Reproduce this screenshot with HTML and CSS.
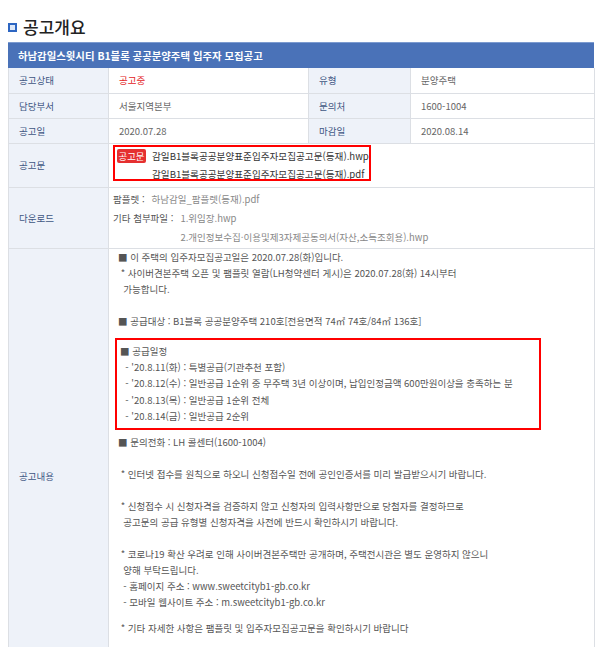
FILE: index.html
```html
<!DOCTYPE html>
<html lang="ko">
<head>
<meta charset="UTF-8" />
<title>공고개요</title>
<meta name="viewport" content="width=device-width, initial-scale=1" />
<link rel="stylesheet" href="styles.css">
</head>
<body>
  <div class="page">
    <!-- TITLE -->
    <h2 class="sec-title"><span class="sq"></span>공고개요</h2>
    <div class="notice-head">하남감일스윗시티 B1블록 공공분양주택 입주자 모집공고</div>

    <!-- SUMMARY TABLE -->
    <table class="info">
      <colgroup>
        <col class="c-lab" /><col class="c-val" /><col class="c-lab2" /><col class="c-val2" />
      </colgroup>
      <tr class="r-short">
        <th>공고상태</th><td class="state">공고중</td>
        <th>유형</th><td>분양주택</td>
      </tr>
      <tr class="r-short">
        <th>담당부서</th><td>서울지역본부</td>
        <th>문의처</th><td>1600-1004</td>
      </tr>
      <tr class="r-short">
        <th>공고일</th><td>2020.07.28</td>
        <th>마감일</th><td>2020.08.14</td>
      </tr>
      <tr class="r-doc">
        <th>공고문</th>
        <td colspan="3">
          <div class="doc-box">
            <div class="doc-line"><span class="badge">공고문</span>감일B1블록공공분양표준입주자모집공고문(등재).hwp</div>
            <div class="doc-line indent">감일B1블록공공분양표준입주자모집공고문(등재).pdf</div>
          </div>
        </td>
      </tr>
      <tr class="r-down">
        <th>다운로드</th>
        <td colspan="3">
          <div class="dl-row">
            <span class="dl-key">팜플렛 :</span>
            <div class="dl-files"><div>하남감일_팜플렛(등재).pdf</div></div>
          </div>
          <div class="dl-row">
            <span class="dl-key">기타 첨부파일 :</span>
            <div class="dl-files">
              <div>1.위임장.hwp</div>
              <div>2.개인정보수집·이용및제3자제공동의서(자산,소득조회용).hwp</div>
            </div>
          </div>
        </td>
      </tr>
      <tr class="r-body">
        <th>공고내용</th>
        <td colspan="3" class="body-cell">
          <p>■ 이 주택의 입주자모집공고일은 2020.07.28(화)입니다.</p>
          <p>&nbsp;* 사이버견본주택 오픈 및 팸플릿 열람(LH청약센터 게시)은 2020.07.28(화) 14시부터</p>
          <p>&nbsp;&nbsp;가능합니다.</p>
          <p class="gap">■ 공급대상 : B1블록 공공분양주택 210호[전용면적 74㎡ 74호/84㎡ 136호]</p>

          <div class="sched-box">
            <p>■ 공급일정</p>
            <p>&nbsp;&nbsp;- '20.8.11(화) : 특별공급(기관추천 포함)</p>
            <p>&nbsp;&nbsp;- '20.8.12(수) : 일반공급 1순위 중 무주택 3년 이상이며, 납입인정금액 600만원이상을 충족하는 분</p>
            <p>&nbsp;&nbsp;- '20.8.13(목) : 일반공급 1순위 전체</p>
            <p>&nbsp;&nbsp;- '20.8.14(금) : 일반공급 2순위</p>
          </div>

          <p>■ 문의전화 : LH 콜센터(1600-1004)</p>
          <p class="gap">&nbsp;* 인터넷 접수를 원칙으로 하오니 신청접수일 전에 공인인증서를 미리 발급받으시기 바랍니다.</p>
          <p class="gap">&nbsp;* 신청접수 시 신청자격을 검증하지 않고 신청자의 입력사항만으로 당첨자를 결정하므로</p>
          <p>&nbsp;&nbsp;공고문의 공급 유형별 신청자격을 사전에 반드시 확인하시기 바랍니다.</p>
          <p class="gap">&nbsp;* 코로나19 확산 우려로 인해 사이버견본주택만 공개하며, 주택전시관은 별도 운영하지 않으니</p>
          <p>&nbsp;&nbsp;양해 부탁드립니다.</p>
          <p>&nbsp;&nbsp;- 홈페이지 주소 : www.sweetcityb1-gb.co.kr</p>
          <p>&nbsp;&nbsp;- 모바일 웹사이트 주소 : m.sweetcityb1-gb.co.kr</p>
          <p class="gap-s">&nbsp;* 기타 자세한 사항은 팸플릿 및 입주자모집공고문을 확인하시기 바랍니다</p>
        </td>
      </tr>
    </table>
  </div>
</body>
</html>
```

FILE: styles.css
```css
:root {
  --line: #dcdfe4;
  --lab-bg: #eef2f9;
  --lab: #3f5683;
  --head: #4a72b8;
  --red: #ff0000;
  --font: "Noto Sans CJK KR", "Noto Sans", sans-serif;
}

* {
  box-sizing: border-box;
}

html,
body {
  margin: 0;
  padding: 0;
  background: #fff;
  font-family: var(--font);
}

.page {
  width: 586px;
  margin-left: 8px;
  padding-top: 15px;
}

/* ------------ TITLE ------------- */
.sec-title {
  display: flex;
  align-items: center;
  gap: 6px;
  margin: 0 0 3px;
  font-size: 17px;
  font-weight: 500;
  line-height: 24px;
  color: #222;
}
.sq {
  width: 9px;
  height: 9px;
  border: 2px solid #2d66c2;
  background: #dde8f8;
}

.notice-head {
  height: 26px;
  line-height: 25px;
  padding-left: 10px;
  background: var(--head);
  border-top: 1px solid #7c9bd0;
  color: #fff;
  font-size: 10.4px;
  font-weight: bold;
}

/* ------------ TABLE ------------- */
table.info {
  width: 586px;
  border-collapse: collapse;
  table-layout: fixed;
  font-size: 9.5px;
}
col.c-lab { width: 100px; }
col.c-val { width: 200px; }
col.c-lab2 { width: 102px; }
col.c-val2 { width: 184px; }

table.info th,
table.info td {
  border: 1px solid var(--line);
  border-top: none;
  text-align: left;
  vertical-align: middle;
  padding: 0 0 0 10px;
}
table.info th {
  background: var(--lab-bg);
  color: var(--lab);
  font-weight: normal;
}
table.info td {
  color: #666;
}
table.info td.state { color: #e3221c; }

.r-short th,
.r-short td { height: 25px; }

/* doc row */
.r-doc th,
.r-doc td { height: 44px; }
table.info .r-doc td {
  vertical-align: top;
  padding: 1px 0 0 4px;
}
.doc-box {
  width: 258px;
  height: 36px;
  border: 2px solid var(--red);
  overflow: hidden;
  padding-left: 2px;
}
.doc-line {
  display: flex;
  align-items: center;
  height: 18px;
  line-height: 18px;
  color: #333;
  font-size: 9.6px;
  white-space: nowrap;
}
.doc-line.indent { padding-left: 35px; }
.badge {
  display: inline-block;
  width: 29px;
  height: 14px;
  line-height: 14px;
  margin-right: 6px;
  text-align: center;
  background: #e53030;
  color: #fff;
  border-radius: 2px;
  font-size: 9.4px;
}

/* download row */
.r-down th,
.r-down td { height: 61px; }
table.info .r-down td {
  vertical-align: top;
  padding: 2px 0 0 4px;
}
.dl-row {
  display: flex;
  gap: 7px;
  line-height: 19px;
}
.dl-key { color: #555; }
.dl-files {
  color: #888;
  white-space: nowrap;
}

/* body row */
table.info td.body-cell {
  vertical-align: top;
  padding: 0 0 68px 9px;
  color: #555;
}
.body-cell p {
  margin: 0;
  line-height: 16px;
  white-space: nowrap;
}
.body-cell p.gap { margin-top: 16px; }
.body-cell p.gap-s { margin-top: 10px; }

.sched-box {
  width: 426px;
  margin: 9px 0 4px -3px;
  padding: 3px 0 3px 3px;
  border: 2px solid var(--red);
}
.sched-box p { line-height: 16.4px; }
```
